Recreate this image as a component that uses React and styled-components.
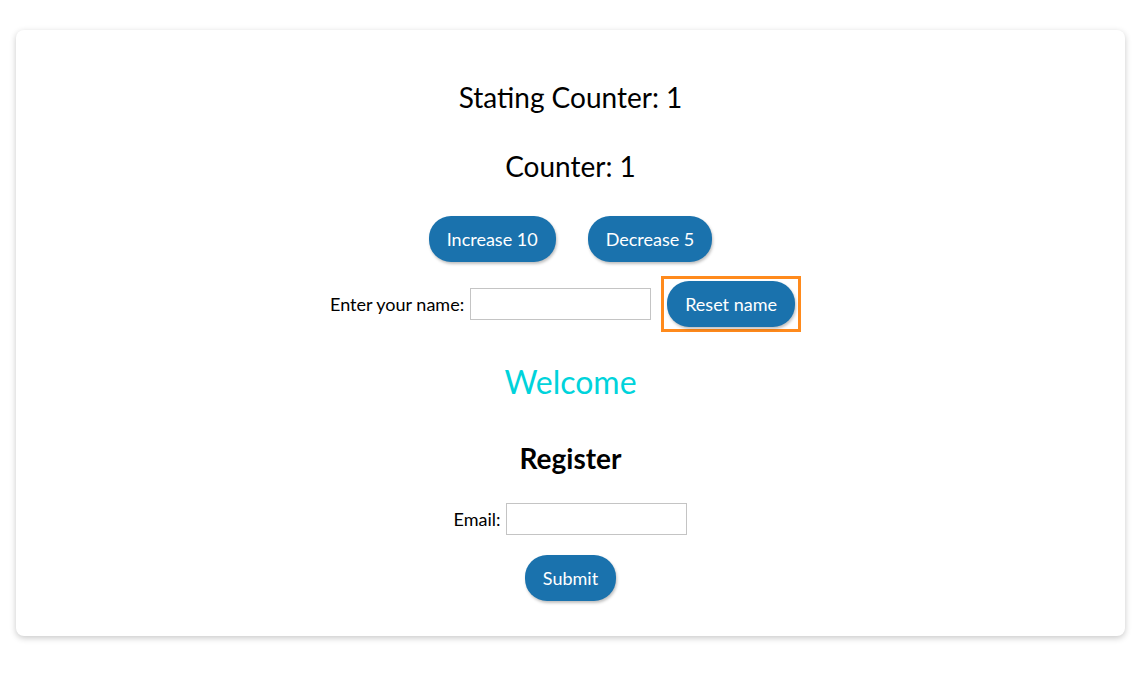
import React from "react";
import styled, { createGlobalStyle } from "styled-components";

const Global = createGlobalStyle`
  html, body { margin: 0; padding: 0; background: #fff; }
  body { font-family: Lato, "Noto Sans", sans-serif; color: #000; }
`;

const Page = styled.div`
  padding: 30px 13px 44px 16px;
`;

const Card = styled.div`
  background: #fff;
  border-radius: 8px;
  box-shadow: 0 2px 6px rgba(0,0,0,0.22);
  height: 606px;
  box-sizing: border-box;
  padding-top: 49px;
  display: flex;
  flex-direction: column;
  align-items: center;
`;

const Title = styled.div`
  font-size: 28px;
  line-height: 36px;
  margin-bottom: ${p => p.$mb}px;
`;

const Row = styled.div`
  display: flex;
  align-items: center;
  justify-content: center;
  gap: ${p => p.$gap}px;
  margin-bottom: ${p => p.$mb}px;
`;

const Button = styled.button`
  font-family: inherit;
  font-size: 18px;
  color: #fff;
  background: #1a72ad;
  border: none;
  border-radius: 22px;
  height: 46px;
  padding: 0 18px;
  box-shadow: 1px 2px 3px rgba(0,0,0,0.25);
  cursor: pointer;
`;

const Focus = styled.div`
  border: 3px solid #ff8a1c;
  padding: 2px 3px;
  margin-right: 10px;
  display: flex;
`;

const Label = styled.label`
  font-size: 18px;
  display: flex;
  align-items: center;
  gap: 6px;
`;

const Input = styled.input`
  width: 181px;
  height: 32px;
  box-sizing: border-box;
  border: 1px solid #c4c4c4;
  font-family: inherit;
  font-size: 16px;
  padding: 0 4px;
  outline: none;
`;

const Welcome = styled.div`
  font-size: 32px;
  color: #00d3db;
  line-height: 40px;
  margin-bottom: 38px;
`;

const Heading = styled.div`
  font-size: 28px;
  font-weight: 700;
  line-height: 36px;
  margin-bottom: 27px;
`;

export default function App() {
  return (
    <Page>
      <Global />
      <Card>
        <Title $mb={33}>Stating Counter: 1</Title>
        <Title $mb={32}>Counter: 1</Title>
        <Row $gap={32} $mb={14}>
          <Button>Increase 10</Button>
          <Button>Decrease 5</Button>
        </Row>
        <Row $gap={10} $mb={30}>
          <Label>Enter your name: <Input type="text" /></Label>
          <Focus><Button>Reset name</Button></Focus>
        </Row>
        <Welcome>Welcome</Welcome>
        <Heading>Register</Heading>
        <Row $gap={0} $mb={20}>
          <Label>Email: <Input type="text" /></Label>
        </Row>
        <Button>Submit</Button>
      </Card>
    </Page>
  );
}
